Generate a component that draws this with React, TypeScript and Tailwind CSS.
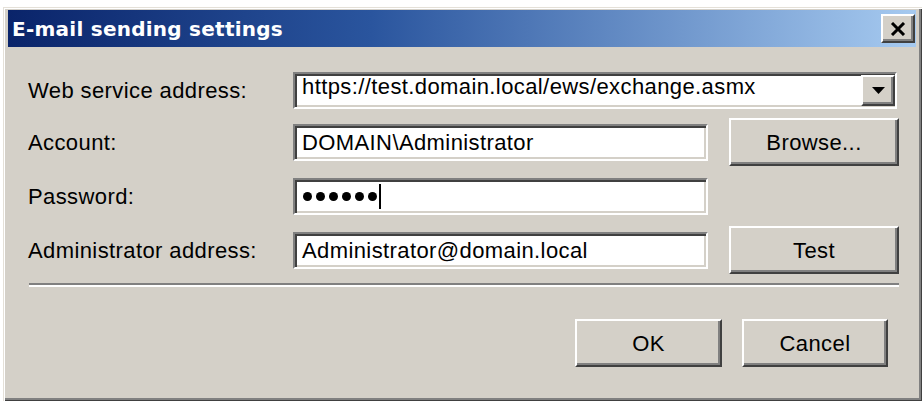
import React from "react";

const sunken =
  "bg-white border-2 border-t-[#808080] border-l-[#808080] border-r-white border-b-white shadow-[inset_2px_2px_0_#404040,inset_-2px_-2px_0_#d4d0c8]";
const raised =
  "bg-[#d4d0c8] border-2 border-t-white border-l-white border-r-[#404040] border-b-[#404040] shadow-[inset_-2px_-2px_0_#808080]";

function Button({ label, className = "" }: { label: string; className?: string }) {
  return (
    <div className={`${raised} flex items-center justify-center h-[48px] ${className}`}>
      <span>{label}</span>
    </div>
  );
}

function Field({ value, className = "" }: { value: string; className?: string }) {
  return (
    <div className={`${sunken} flex items-center h-[37px] pl-[7px] ${className}`}>
      <span className="whitespace-nowrap">{value}</span>
    </div>
  );
}

export default function App() {
  return (
    <div className="w-[924px] h-[404px] bg-white overflow-hidden pt-[7px] pl-[3px]">
      <div className="w-[919px] h-[394px] bg-[#d4d0c8] flex flex-col shadow-[inset_1px_1px_0_#e4e0d8,inset_2px_2px_0_#ffffff,inset_-1px_-1px_0_#404040,inset_-3px_-3px_0_#808080] font-['Liberation_Sans',Arial,sans-serif] text-[22px] tracking-[0.4px] text-black">
        {/* title bar */}
        <div className="mt-[3px] ml-[5px] mr-[6px] h-[37px] flex items-center justify-between bg-[linear-gradient(90deg,#0a246a_0%,#2a559e_40%,#a6caf0_100%)]">
          <span className="pl-[4px] text-white font-bold text-[20px] tracking-[0.25px] font-['DejaVu_Sans',Verdana,sans-serif]">
            E-mail sending settings
          </span>
          <div className={`${raised} mr-[1px] w-[34px] h-[29px] flex items-center justify-center`}>
            <svg width="16" height="14" viewBox="0 0 16 14">
              <path d="M2 1 L14 13 M14 1 L2 13" stroke="#000" strokeWidth="3" fill="none" />
            </svg>
          </div>
        </div>

        {/* form */}
        <div className="pl-[25px] pr-[23px] pt-[19px] flex flex-col">
          <div className="flex items-center h-[48px]">
            <div className="w-[265px]">Web service address:</div>
            <div className={`${sunken} flex items-start h-[37px] w-[604px]`}>
              <span className="flex-1 pl-[7px] leading-[25px] whitespace-nowrap">https://test.domain.local/ews/exchange.asmx</span>
              <div className={`${raised} w-[34px] h-[31px] mt-[1px] flex items-center justify-center`}>
                <svg width="13" height="7" viewBox="0 0 13 7">
                  <path d="M0 0 L13 0 L6.5 7 Z" fill="#000" />
                </svg>
              </div>
            </div>
          </div>

          <div className="flex items-center h-[48px] mt-[4px]">
            <div className="w-[265px]">Account:</div>
            <Field value="DOMAIN\Administrator" className="w-[415px]" />
            <Button label="Browse..." className="ml-[21px] w-[170px]" />
          </div>

          <div className="flex items-center h-[48px] mt-[6px]">
            <div className="w-[265px]">Password:</div>
            <div className={`${sunken} flex items-center h-[37px] w-[415px] pl-[8px]`}>
              <div className="flex items-center gap-[4px]">
                <div className="w-[9px] h-[9px] rounded-full bg-black" />
                <div className="w-[9px] h-[9px] rounded-full bg-black" />
                <div className="w-[9px] h-[9px] rounded-full bg-black" />
                <div className="w-[9px] h-[9px] rounded-full bg-black" />
                <div className="w-[9px] h-[9px] rounded-full bg-black" />
                <div className="w-[9px] h-[9px] rounded-full bg-black" />
              </div>
              <div className="ml-[2px] w-[2px] h-[25px] bg-black" />
            </div>
          </div>

          <div className="flex items-center h-[48px] mt-[6px]">
            <div className="w-[265px]">Administrator address:</div>
            <Field value="Administrator@domain.local" className="w-[415px]" />
            <Button label="Test" className="ml-[21px] w-[170px]" />
          </div>

          <div className="mt-[9px] ml-[1px] border-t-2 border-t-[#808080] border-b-2 border-b-white" />

          <div className="mt-[32px] flex justify-end gap-[20px] pr-[11px]">
            <Button label="OK" className="w-[147px] h-[46px]" />
            <Button label="Cancel" className="w-[146px] h-[46px]" />
          </div>
        </div>
      </div>
    </div>
  );
}
